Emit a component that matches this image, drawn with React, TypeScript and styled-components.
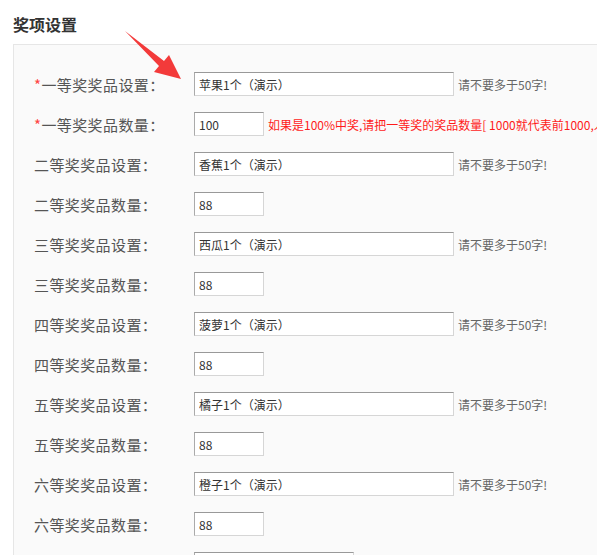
import React from "react";
import styled, { createGlobalStyle } from "styled-components";

const GlobalStyle = createGlobalStyle`
  html, body {
    margin: 0;
    padding: 0;
    background: #ffffff;
    overflow: hidden;
  }
  body {
    font-family: "Noto Sans CJK SC", "Noto Sans", "Liberation Sans", sans-serif;
    color: #555;
  }
`;

const Page = styled.div`
  position: relative;
  width: 597px;
  height: 555px;
  overflow: hidden;
`;

const Heading = styled.h3`
  margin: 0;
  padding: 12px 13px 0;
  font-size: 16px;
  line-height: 24px;
  font-weight: bold;
  color: #333;
`;

const Panel = styled.div`
  margin: 8px 0 0 13px;
  width: 760px;
  padding: 19px 0 0 20px;
  background: #fafafa;
  border: 1px solid #e6e6e6;
  border-right: none;
`;

const Row = styled.div`
  display: flex;
  align-items: center;
  height: 40px;
  white-space: nowrap;
`;

const Label = styled.label`
  flex: 0 0 160px;
  font-size: 15px;
  letter-spacing: 0.4px;
  color: #555;
`;

const Star = styled.span`
  color: #f44;
`;

const Field = styled.input<{ $width: number }>`
  box-sizing: border-box;
  width: ${(p) => p.$width}px;
  height: 24px;
  padding: 0 4px;
  border: 1px solid #d6d6d6;
  border-top-color: #999;
  border-left-color: #aaa;
  background: #fff;
  font-family: inherit;
  font-size: 12px;
  color: #333;
  outline: none;
`;

const Hint = styled.span<{ $warn?: boolean }>`
  margin-left: 4px;
  font-size: 12px;
  color: ${(p) => (p.$warn ? "#ff1a1a" : "#666")};
`;

const Arrow = styled.svg`
  position: absolute;
  left: 0;
  top: 0;
  pointer-events: none;
`;

interface Prize {
  rank: string;
  name: string;
  count: string;
  required?: boolean;
}

const prizes: Prize[] = [
  { rank: "一等奖", name: "苹果1个（演示）", count: "100", required: true },
  { rank: "二等奖", name: "香蕉1个（演示）", count: "88" },
  { rank: "三等奖", name: "西瓜1个（演示）", count: "88" },
  { rank: "四等奖", name: "菠萝1个（演示）", count: "88" },
  { rank: "五等奖", name: "橘子1个（演示）", count: "88" },
  { rank: "六等奖", name: "橙子1个（演示）", count: "88" },
];

export default function App() {
  return (
    <Page>
      <GlobalStyle />
      <Heading>奖项设置</Heading>
      <Panel>
        {prizes.map((p) => (
          <React.Fragment key={p.rank}>
            <Row>
              <Label>
                {p.required && <Star>*</Star>}
                {p.rank}奖品设置：
              </Label>
              <Field $width={260} defaultValue={p.name} />
              <Hint>请不要多于50字!</Hint>
            </Row>
            <Row>
              <Label>
                {p.required && <Star>*</Star>}
                {p.rank}奖品数量：
              </Label>
              <Field $width={70} defaultValue={p.count} />
              {p.required && (
                <Hint $warn>
                  如果是100%中奖,请把一等奖的奖品数量[ 1000就代表前1000,人中奖 ]设置大一些
                </Hint>
              )}
            </Row>
          </React.Fragment>
        ))}
        <Row>
          <Label>中奖提示：</Label>
          <Field $width={160} defaultValue="" />
        </Row>
      </Panel>
      <Arrow width="597" height="555" viewBox="0 0 597 555">
        <polygon
          points="125,31 164,61 169,55 181,79 154,72 159,66"
          fill="#f33a3a"
        />
      </Arrow>
    </Page>
  );
}
